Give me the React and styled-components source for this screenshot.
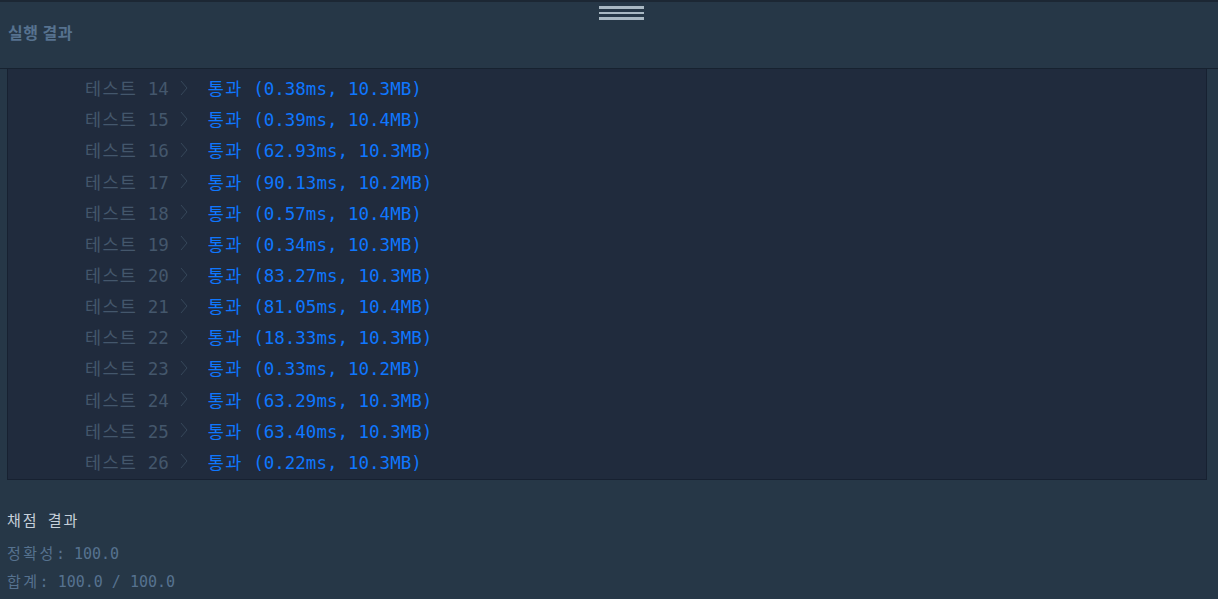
import React from "react";
import styled, { createGlobalStyle } from "styled-components";

const GlobalStyle = createGlobalStyle`
  html, body {
    margin: 0;
    padding: 0;
    background-color: #263747;
  }
  #root {
    min-height: 100vh;
  }
`;

const Page = styled.div`
  width: 1218px;
  height: 599px;
  overflow: hidden;
  display: flex;
  flex-direction: column;
  background-color: #263747;
  border-top: 2px solid #1c2734;
`;

const Header = styled.div`
  height: 67px;
  display: flex;
  flex-direction: column;
  border-bottom: 1px solid #172230;
  box-sizing: border-box;
`;

const Grip = styled.div`
  align-self: center;
  margin-left: 25px;
  padding-top: 4px;
  display: flex;
  flex-direction: column;
  gap: 3px;
  & span {
    display: block;
    width: 45px;
    height: 2.5px;
    background-color: #a9b8c3;
  }
`;

const Title = styled.h3`
  margin: 0;
  padding: 0 0 0 8px;
  font-family: "Noto Sans CJK KR", "Noto Sans", sans-serif;
  font-size: 16px;
  font-weight: 700;
  line-height: 24px;
  letter-spacing: 0.5px;
  color: #56728f;
`;

const Body = styled.div`
  padding: 0 11px 0 7px;
  display: flex;
  flex-direction: column;
`;

const Console = styled.div`
  background-color: #202b3d;
  border: 1px solid #172131;
  border-top: none;
  padding: 3px 0 2px 77px;
  font-family: "DejaVu Sans Mono", "Noto Sans CJK KR", monospace;
  font-size: 17.5px;
`;

const Row = styled.div`
  height: 31.17px;
  display: flex;
  align-items: center;
  white-space: pre;
`;

const Ko = styled.span`
  letter-spacing: ${(props) => props.$spacing || "1.3px"};
`;

const Label = styled.span`
  color: #44576c;
`;

const Chevron = styled.svg`
  width: 10px;
  height: 18px;
  margin: 0 19px 0 10px;
  flex: none;
`;

const Pass = styled.span`
  color: #0f77ff;
`;

const Summary = styled.div`
  padding: 30px 0 0 0;
  font-family: "DejaVu Sans Mono", "Noto Sans CJK KR", monospace;
`;

const SummaryTitle = styled.div`
  font-size: 15px;
  line-height: 22px;
  color: #c6d0da;
  margin-bottom: 8px;
`;

const SummaryLine = styled.div`
  font-size: 15px;
  line-height: 28px;
  color: #56728f;
  white-space: pre;
`;

const results = [
  [14, "0.38ms, 10.3MB"],
  [15, "0.39ms, 10.4MB"],
  [16, "62.93ms, 10.3MB"],
  [17, "90.13ms, 10.2MB"],
  [18, "0.57ms, 10.4MB"],
  [19, "0.34ms, 10.3MB"],
  [20, "83.27ms, 10.3MB"],
  [21, "81.05ms, 10.4MB"],
  [22, "18.33ms, 10.3MB"],
  [23, "0.33ms, 10.2MB"],
  [24, "63.29ms, 10.3MB"],
  [25, "63.40ms, 10.3MB"],
  [26, "0.22ms, 10.3MB"],
];

function App() {
  return (
    <>
      <GlobalStyle />
      <Page>
        <Header>
          <Grip>
            <span />
            <span />
            <span />
          </Grip>
          <Title>실행 결과</Title>
        </Header>
        <Body>
          <Console>
            {results.map(([n, info]) => (
              <Row key={n}>
                <Label>
                  <Ko>테스트</Ko> {n}
                </Label>
                <Chevron viewBox="0 0 10 18">
                  <polyline
                    points="2,2 8,9 2,16"
                    fill="none"
                    stroke="#36475a"
                    strokeWidth="1"
                  />
                </Chevron>
                <Pass>
                  <Ko>통과</Ko> ({info})
                </Pass>
              </Row>
            ))}
          </Console>
          <Summary>
            <SummaryTitle>
              <Ko $spacing="2px">채점</Ko> <Ko $spacing="2px">결과</Ko>
            </SummaryTitle>
            <SummaryLine>
              <Ko $spacing="2.5px">정확성</Ko>: 100.0
            </SummaryLine>
            <SummaryLine>
              <Ko $spacing="2.5px">합계</Ko>: 100.0 / 100.0
            </SummaryLine>
          </Summary>
        </Body>
      </Page>
    </>
  );
}

export default App;
